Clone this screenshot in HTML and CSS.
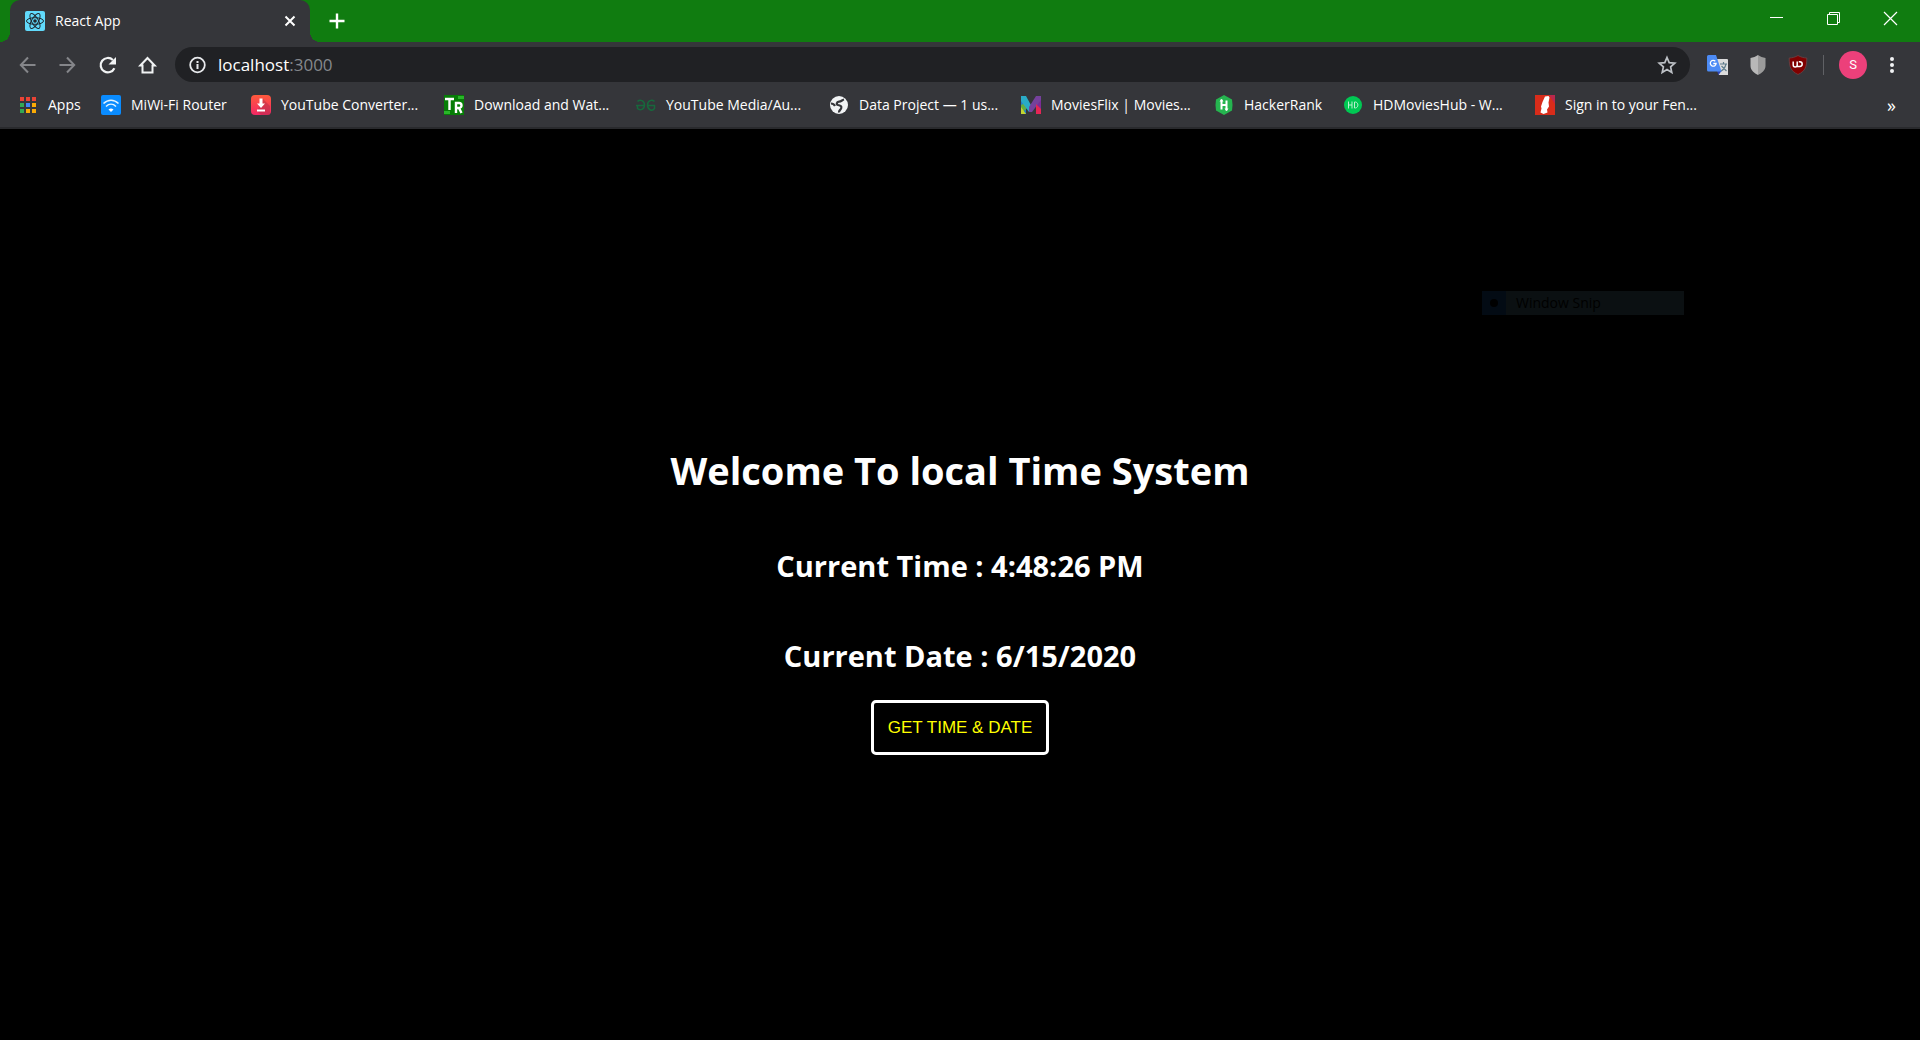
FILE: index.html
```html
<!DOCTYPE html>
<html lang="en">
<head>
<meta charset="utf-8">
<title>React App</title>
<link rel="stylesheet" href="styles.css">
</head>
<body>
<header class="browser">
  <div class="titlebar">
    <div class="tab">
      <svg class="icon" viewBox="0 0 20 20" aria-hidden="true"><rect width="20" height="20" rx="2" fill="#61dafb"/><g fill="none" stroke="#20262c" stroke-width="1"><ellipse cx="10" cy="10" rx="8.5" ry="3.3"/><ellipse cx="10" cy="10" rx="8.5" ry="3.3" transform="rotate(60 10 10)"/><ellipse cx="10" cy="10" rx="8.5" ry="3.3" transform="rotate(120 10 10)"/></g><circle cx="10" cy="10" r="1.8" fill="#20262c"/></svg>
      <span class="tab-title">React App</span>
      <button class="tool" aria-label="Close tab"><svg width="20" height="20" viewBox="0 0 20 20"><path d="M5.5 5.5l9 9M14.5 5.5l-9 9" stroke="#fff" stroke-width="2"/></svg></button>
    </div>
    <button class="tool new-tab" aria-label="New tab"><svg width="20" height="20" viewBox="0 0 20 20"><path d="M10 2.5v15M2.5 10h15" stroke="#fff" stroke-width="2.4"/></svg></button>
    <div class="window-controls">
      <button class="tool" aria-label="Minimize"><svg width="20" height="20" viewBox="0 0 20 20"><path d="M4 9.500h13" stroke="#fff"/></svg></button>
      <button class="tool" aria-label="Restore"><svg width="20" height="20" viewBox="0 0 20 20"><path d="M4.500 6.500h10v10h-10zM6.500 6.500v-2h10v10h-2" fill="none" stroke="#fff"/></svg></button>
      <button class="tool" aria-label="Close"><svg width="20" height="20" viewBox="0 0 20 20"><path d="M4 4l13 13M17 4L4 17" stroke="#fff" stroke-width="1.200"/></svg></button>
    </div>
  </div>
  <div class="toolbar">
    <nav class="nav-buttons" aria-label="Navigation">
      <button class="tool" aria-label="Back"><svg width="20" height="20" viewBox="0 0 20 20"><path d="M17.500 10H3M10 2.500L2.800 10l7.200 7.500" fill="none" stroke="#85868a" stroke-width="2"/></svg></button>
      <button class="tool" aria-label="Forward"><svg width="20" height="20" viewBox="0 0 20 20"><path d="M1.500 10H16M9 2.500l7.200 7.500L9 17.500" fill="none" stroke="#85868a" stroke-width="2"/></svg></button>
      <button class="tool" aria-label="Reload"><svg width="20" height="20" viewBox="0 0 20 20"><path d="M16.400 13.200A7.200 7.200 0 1 1 14.900 5" fill="none" stroke="#f1f3f4" stroke-width="2.200"/><path d="M18 2v7.500h-7.500z" fill="#f1f3f4"/></svg></button>
      <button class="tool" aria-label="Home"><svg width="20" height="20" viewBox="0 0 20 20"><path d="M2.300 10.500L9.500 3l7.200 7.500h-2.200v7h-10v-7z" fill="none" stroke="#f1f3f4" stroke-width="2"/></svg></button>
    </nav>
    <div class="omnibox">
      <svg class="icon" viewBox="0 0 20 20" aria-hidden="true"><circle cx="9.500" cy="10" r="7.300" fill="none" stroke="#e8eaed" stroke-width="1.800"/><path d="M9.500 9v5M9.500 6v2" stroke="#e8eaed" stroke-width="2"/></svg>
      <a class="url" href="#">localhost<span class="port">:3000</span></a>
      <button class="tool" aria-label="Bookmark this page"><svg width="20" height="20" viewBox="0 0 20 20"><path d="M10 2.500l2.200 5.200 5.600.5-4.200 3.700 1.200 5.500L10 14.500l-4.800 2.900 1.200-5.500-4.200-3.700 5.600-.5z" fill="none" stroke="#bdc1c6" stroke-width="1.700"/></svg></button>
    </div>
    <div class="account">
      <div class="extensions">
        <button class="tool" aria-label="Translate"><svg width="21" height="20" viewBox="0 0 21 20"><path d="M9 4h11a1 1 0 0 1 1 1v15h-9z" fill="#dcdcdc"/><path d="M13 9h7M16.500 7v2M19 9c-1 4-3 6-5 7M14.500 11l5 5" fill="none" stroke="#607d8b" stroke-width="1.200"/><path d="M10 16h4.500L11.500 20z" fill="#3045b0"/><path d="M1.500 0H9l5.500 16.500H1.500A1.500 1.500 0 0 1 0 15V1.500A1.500 1.500 0 0 1 1.500 0z" fill="#4c8bf5"/><path d="M8.300 6.300A2.900 2.900 0 1 0 9.100 8.500H6.300" fill="none" stroke="#fff" stroke-width="1.300"/></svg></button>
        <button class="tool" aria-label="Shield"><svg width="20" height="20" viewBox="0 0 20 20"><path d="M10 0C8 1.500 5 2.500 2.500 3v8c0 4 4 7.500 7.500 9z" fill="#b8b8b8"/><path d="M10 0c2 1.500 5 2.500 7.500 3v8c0 4-4 7.500-7.500 9z" fill="#9b9b9b"/></svg></button>
        <button class="tool" aria-label="uBlock Origin"><svg width="20" height="20" viewBox="0 0 20 20"><path d="M10 .5C7.500 2 4 3 1.200 3c0 9 1.500 13 8.800 16.500C17.300 16 18.800 12 18.800 3 16 3 12.500 2 10 .5z" fill="#800000" stroke="#6a4547" stroke-width=".8"/><path d="M5.200 6.500v3.500a2 2 0 0 0 4 0M9.200 6.500v5h2.600a2.400 2.400 0 0 0 0-4.800h-1" fill="none" stroke="#fff" stroke-width="1.500"/></svg></button>
      </div>
      <span class="divider"></span>
      <button class="avatar" aria-label="Profile">S</button>
      <button class="tool" aria-label="Menu"><svg width="20" height="20" viewBox="0 0 20 20" fill="#f1f3f4"><circle cx="10" cy="4" r="2"/><circle cx="10" cy="10" r="2"/><circle cx="10" cy="16" r="2"/></svg></button>
    </div>
  </div>
  <nav class="bookmarks" aria-label="Bookmarks">
    <a class="bookmark" href="#"><svg class="icon" viewBox="0 0 20 20"><path d="M2 2h4v4H2zM8 2h4v4H8zM14 2h4v4h-4z" fill="#ea4335"/><path d="M2 8h4v4H2zM2 14h4v4H2z" fill="#34a853"/><path d="M8 8h4v4H8z" fill="#4285f4"/><path d="M14 8h4v4h-4zM8 14h4v4H8zM14 14h4v4h-4z" fill="#fbab05"/></svg>Apps</a>
    <a class="bookmark" href="#"><svg class="icon" viewBox="0 0 20 20"><rect width="20" height="20" rx="2" fill="#0a8cff"/><g fill="none" stroke="#e4f4ff" stroke-width="1.500"><path d="M2.500 8.500c4.500-4.500 10.500-4.500 15 0M5 11.500c3-3 7-3 10 0"/></g><path d="M7.500 14.500q2.500-2 5 0L10 17z" fill="#fff"/></svg>MiWi-Fi Router</a>
    <a class="bookmark" href="#"><svg class="icon" viewBox="0 0 20 20"><defs><linearGradient id="dl" x2="0" y2="1"><stop stop-color="#ff5a3c"/><stop offset="1" stop-color="#f22765"/></linearGradient></defs><rect width="20" height="20" rx="4" fill="url(#dl)"/><path d="M12 4l7 7v9H10l-4-4z" fill="#a82f46" opacity=".45"/><path d="M8.500 3.500h3v5H14L10 13 6 8.500h2.500zM6 14.500h8v2H6z" fill="#fff"/></svg>YouTube Converter...</a>
    <a class="bookmark" href="#"><svg class="icon" viewBox="0 0 20 20"><path d="M0 0h20v20H0z" fill="#067d06"/><path d="M14 1h6v3h-6zM0 16h6v3H0z" fill="#29b529"/><path d="M1 4h9M5.500 4v11M12 18V8h3a2.300 2.300 0 0 1 0 5h-3M15 13l2.500 5" fill="none" stroke="#fff" stroke-width="2.400"/></svg>Download and Wat...</a>
    <a class="bookmark" href="#"><svg class="icon" viewBox="0 0 20 20"><path d="M1.500 6.500C4 4 8.500 5.500 8.500 10S4 16 1.500 13.500v-3M0 10.500h9M18.500 6.500C16 4 11.500 5.500 11.500 10s4.500 7 7 3.500v-3H11" fill="none" stroke="#17683c" stroke-width="1.500"/></svg>YouTube Media/Au...</a>
    <a class="bookmark" href="#"><svg class="icon" viewBox="0 0 20 20"><circle cx="10" cy="10" r="9" fill="#f1f3f4"/><path d="M15 4.500c-2 .5-2.500 2-5 2.200-2.500.2-3 2.800-.8 3.300 3 .6 3.500 1.500 3 3.200-.5 1.800-2.500 2-2.200 4.300M2 8.500c1.500 0 3 .500 4 2.500" fill="none" stroke="#35363a" stroke-width="2.200"/></svg>Data Project — 1 us...</a>
    <a class="bookmark" href="#"><svg class="icon" viewBox="0 0 20 20"><path d="M0 1h5v18H0z" fill="#247fc4"/><path d="M0 10l6-3v6l-6 6z" fill="#65ac40"/><path d="M0 12v7h5z" fill="#c4d52f"/><path d="M0 1h5l6 11-3 5L0 6z" fill="#2aabc6"/><path d="M15 1h5v18h-5z" fill="#7b2c96"/><path d="M15 1L8 12v5h3l9-12V1z" fill="#75419c"/><path d="M15 9l5 5v5h-5z" fill="#e52555"/></svg>MoviesFlix | Movies...</a>
    <a class="bookmark" href="#"><svg class="icon" viewBox="0 0 20 20"><path d="M10 0l8 4.500q1 5.500 0 11L10 20l-8-4.500q-1-5.500 0-11z" fill="#25b44f"/><path d="M7.500 4.500v10M12.500 5.500v10M7.500 10h5" fill="none" stroke="#fff" stroke-width="2"/><path d="M5.500 6.500l2-2.500 2 2.500zM10.500 13.500l2 2.500 2-2.500z" fill="#fff"/></svg>HackerRank</a>
    <a class="bookmark" href="#"><svg class="icon" viewBox="0 0 20 20"><circle cx="10" cy="10" r="9" fill="#00c853"/><path d="M5.500 6.500v7M9 6.500v7M5.500 10H9M11.500 7v6c4.500.5 4.500-6.500 0-6z" fill="none" stroke="#b9f0cf" stroke-width="1"/></svg>HDMoviesHub - W...</a>
    <a class="bookmark" href="#"><svg class="icon" viewBox="0 0 20 20"><path d="M0 0h20v20H0z" fill="#d82c1a"/><path d="M14 0h6v9z" fill="#b8284c"/><path d="M10 1.500l3.500-.5 1 1.500-1 5 .5 4-2 3 .5 3-4 1.500-3-1.500 1-4-.5-2L7.500 7z" fill="#fff"/></svg>Sign in to your Fen...</a>
    <button class="tool more" aria-label="More bookmarks">»</button>
  </nav>
</header>
<main class="page">
  <h1>Welcome To local Time System</h1>
  <h2>Current Time : 4:48:26 PM</h2>
  <h2>Current Date : 6/15/2020</h2>
  <button class="get-time">GET TIME &amp; DATE</button>
  <div class="snip"><span class="snip-mark"><span class="dot"></span></span><span class="snip-label">Window Snip</span></div>
</main>
</body>
</html>
```
FILE: styles.css
```css
* { box-sizing: border-box; }
body {
  margin: 0;
  min-height: 100vh;
  display: flex;
  flex-direction: column;
  background: #000;
  color: #fff;
  font-family: "Open Sans", sans-serif;
  font-size: 14px;
}
button { padding: 0; border: 0; background: none; color: inherit; font: inherit; }
a { color: inherit; text-decoration: none; }
svg { display: block; flex: none; }
.icon { width: 20px; height: 20px; }
.tool { display: flex; flex: none; align-items: center; justify-content: center; }

.browser { background: #35363a; border-bottom: 2px solid #292a2d; }
.titlebar { display: flex; height: 42px; padding-left: 10px; background: #107c10; }
.tab {
  position: relative;
  display: flex;
  align-items: center;
  width: 300px;
  padding: 0 10px 0 15px;
  gap: 10px;
  border-radius: 10px 10px 0 0;
  background: #35363a;
}
.tab::before, .tab::after {
  content: "";
  position: absolute;
  bottom: 0;
  width: 10px;
  height: 10px;
}
.tab::before { right: 100%; background: radial-gradient(circle at 0 0, #107c10 10px, #35363a 10px); }
.tab::after { left: 100%; background: radial-gradient(circle at 100% 0, #107c10 10px, #35363a 10px); }
.tab-title { flex: 1; line-height: 20px; }
.new-tab { margin-left: 17px; }
.window-controls { display: flex; height: 36px; margin-left: auto; padding-right: 2px; }
.window-controls .tool { width: 57px; }

.toolbar { display: flex; align-items: center; height: 45px; padding: 0 18px; }
.nav-buttons { display: flex; gap: 20px; }
.omnibox {
  display: flex;
  flex: 1;
  align-items: center;
  height: 35px;
  margin: 0 17px;
  padding: 0 13px;
  gap: 10px;
  border-radius: 18px;
  background: #202124;
}
.url { flex: 1; font-size: 17px; line-height: 24px; }
.port { color: #85888c; }
.account { display: flex; align-items: center; gap: 15px; }
.extensions { display: flex; align-items: center; gap: 20px; }
.divider { width: 1px; height: 20px; background: #606165; }
.avatar {
  width: 28px;
  height: 28px;
  border-radius: 50%;
  background: #ec407a;
  font-family: Roboto, sans-serif;
  font-size: 13px;
}

.bookmarks {
  display: grid;
  grid-template-columns: 83px 150px 193px 192px 193px 192px 193px 129px 192px 1fr auto;
  align-items: center;
  height: 40px;
  padding: 0 24px 5px 18px;
}
.bookmark { display: flex; align-items: center; gap: 10px; line-height: 20px; white-space: nowrap; }
.more { font-size: 18px; line-height: 20px; }

.page {
  position: relative;
  flex: 1;
  display: flex;
  flex-direction: column;
  align-items: center;
  padding-top: 311px;
}
h1, h2 { margin: 0; font-weight: 700; text-align: center; }
h1 { font-size: 38px; line-height: 60px; margin-bottom: 46px; }
h2 { font-size: 29px; line-height: 40px; margin-bottom: 50px; }
h2 + h2 { margin-bottom: 24px; }
.get-time {
  height: 55px;
  padding: 0 14px;
  border: 3px solid #fff;
  border-radius: 5px;
  color: #ff0;
  font-family: "Liberation Sans", Arial, sans-serif;
  font-size: 17px;
}
.snip {
  position: absolute;
  top: 162px;
  right: 236px;
  display: flex;
  width: 202px;
  height: 24px;
  background: #0b1012;
  color: #000;
}
.snip-mark { display: flex; align-items: center; justify-content: center; width: 24px; background: #030b14; }
.dot { width: 8px; height: 8px; border-radius: 50%; background: #000; }
.snip-label { padding-left: 10px; line-height: 24px; }
```
